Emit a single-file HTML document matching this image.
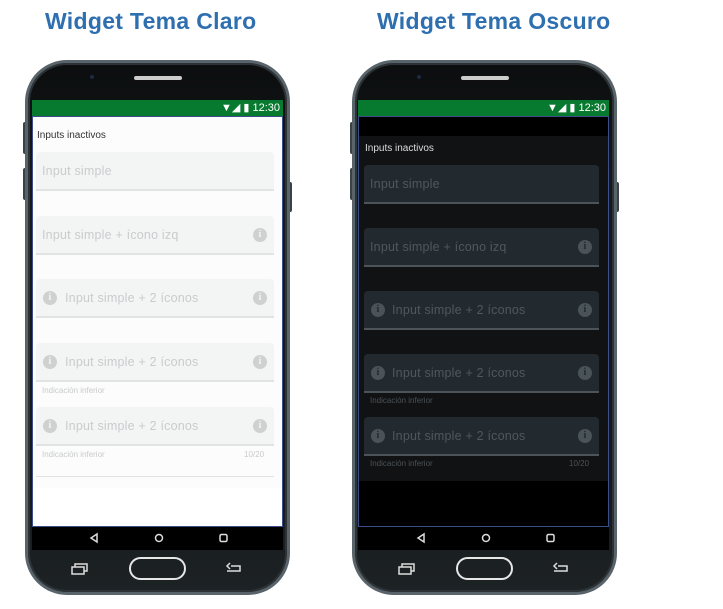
<!DOCTYPE html>
<html><head><meta charset="utf-8"><style>
*{margin:0;padding:0;box-sizing:border-box}
body{width:723px;height:609px;background:#fff;position:relative;overflow:hidden;font-family:"Liberation Sans",Arial,sans-serif}
.abs{position:absolute}
.title{position:absolute;top:8px;font-weight:bold;font-size:23px;color:#2e6fb0;letter-spacing:0.3px}
.phone{position:absolute;top:60px;width:265px;height:535px;border-radius:42px;background:linear-gradient(#0b0d0e,#15191b 20%,#15191b 80%,#1d2224);border:3px solid #59636a;box-shadow:inset 0 0 0 2px #2c3235}
.btn{position:absolute;width:4px;background:#3a4246;border-radius:2px}
.status{position:absolute;height:16px;background:#077a2f;color:#fff;font-size:10px}
.screen{position:absolute;width:251px;height:411px;border:1px solid #3a4f8a}
.nav{position:absolute;height:23px;background:#000}
.f{position:absolute;height:39px;border-radius:4px 4px 0 0;font-size:12.5px;line-height:39px;letter-spacing:0.2px}
.lt .f{background:#f3f5f5;border-bottom:2px solid #e2e4e4;color:#c9cccc}
.dk .f{background:#222a30;border-bottom:2px solid #4c545a;color:#4f585e}
.ic{position:absolute;top:12px;width:14px;height:14px;border-radius:50%;font:bold 10px/14px "Liberation Serif",serif;text-align:center}
.lt .ic{background:#cfd1d1;color:#f3f5f5}
.dk .ic{background:#4a5358;color:#222a30}
.h{position:absolute;font-size:8px}
.lt .h{color:#c8cbcb}.dk .h{color:#4a5257}
.lab{position:absolute;font-size:10px}
</style></head><body>
<div class="title" style="left:45px">Widget Tema Claro</div>
<div class="title" style="left:377px">Widget Tema Oscuro</div>

<!-- LEFT PHONE -->
<div class="btn" style="left:23px;top:122px;height:32px"></div>
<div class="btn" style="left:23px;top:168px;height:32px"></div>
<div class="btn" style="left:288px;top:182px;height:30px"></div>
<div class="phone" style="left:25px"></div>
<div class="abs" style="left:134px;top:76px;width:48px;height:4px;border-radius:2px;background:#ccc"></div>
<div class="abs" style="left:90px;top:75px;width:4px;height:4px;border-radius:50%;background:#1d2a44"></div>
<div class="status" style="left:32px;top:100px;width:251px"><span style="position:absolute;right:3px;top:1px;font-size:11px">&#9660;&#9698; &#9646; 12:30</span></div>
<div class="screen lt" style="left:32px;top:116px;background:#fff">
 <div class="abs" style="left:0;top:0;width:249px;height:371px;background:#fcfcfc"></div>
 <div class="lab" style="left:4px;top:13px;color:#333">Inputs inactivos</div>
 <div class="f" style="left:3px;top:35px;width:238px;padding-left:6px">Input simple</div>
 <div class="f" style="left:3px;top:99px;width:238px;padding-left:6px">Input simple + ícono izq<span class="ic" style="left:217px">i</span></div>
 <div class="f" style="left:3px;top:162px;width:238px;padding-left:29px"><span class="ic" style="left:7px">i</span>Input simple + 2 íconos<span class="ic" style="left:217px">i</span></div>
 <div class="f" style="left:3px;top:226px;width:238px;padding-left:29px"><span class="ic" style="left:7px">i</span>Input simple + 2 íconos<span class="ic" style="left:217px">i</span></div>
 <div class="h" style="left:9px;top:269px">Indicación inferior</div>
 <div class="f" style="left:3px;top:290px;width:238px;padding-left:29px"><span class="ic" style="left:7px">i</span>Input simple + 2 íconos<span class="ic" style="left:217px">i</span></div>
 <div class="h" style="left:9px;top:333px">Indicación inferior</div>
 <div class="h" style="left:211px;top:333px">10/20</div>
 <div class="abs" style="left:3px;top:359px;width:238px;height:1px;background:#e2e4e4"></div>
</div>
<div class="nav" style="left:32px;top:527px;width:251px"></div>

<!-- RIGHT PHONE -->
<div class="btn" style="left:350px;top:122px;height:32px"></div>
<div class="btn" style="left:350px;top:168px;height:32px"></div>
<div class="btn" style="left:615px;top:182px;height:30px"></div>
<div class="phone" style="left:352px"></div>
<div class="abs" style="left:461px;top:76px;width:48px;height:4px;border-radius:2px;background:#ccc"></div>
<div class="abs" style="left:417px;top:75px;width:4px;height:4px;border-radius:50%;background:#1d2a44"></div>
<div class="status" style="left:358px;top:100px;width:251px"><span style="position:absolute;right:3px;top:1px;font-size:11px">&#9660;&#9698; &#9646; 12:30</span></div>
<div class="screen dk" style="left:358px;top:116px;background:#000">
 <div class="abs" style="left:0;top:19px;width:249px;height:345px;background:#111213"></div>
 <div class="lab" style="left:6px;top:26px;color:#ddd">Inputs inactivos</div>
 <div class="f" style="left:5px;top:48px;width:235px;padding-left:6px">Input simple</div>
 <div class="f" style="left:5px;top:111px;width:235px;padding-left:6px">Input simple + ícono izq<span class="ic" style="left:214px">i</span></div>
 <div class="f" style="left:5px;top:174px;width:235px;padding-left:28px"><span class="ic" style="left:7px">i</span>Input simple + 2 íconos<span class="ic" style="left:214px">i</span></div>
 <div class="f" style="left:5px;top:237px;width:235px;padding-left:28px"><span class="ic" style="left:7px">i</span>Input simple + 2 íconos<span class="ic" style="left:214px">i</span></div>
 <div class="h" style="left:11px;top:279px">Indicación inferior</div>
 <div class="f" style="left:5px;top:300px;width:235px;padding-left:28px"><span class="ic" style="left:7px">i</span>Input simple + 2 íconos<span class="ic" style="left:214px">i</span></div>
 <div class="h" style="left:11px;top:342px">Indicación inferior</div>
 <div class="h" style="left:210px;top:342px">10/20</div>
</div>
<div class="nav" style="left:358px;top:527px;width:251px"></div>

<svg class="abs" style="left:0;top:0" width="723" height="609">
 <g fill="none" stroke="#ddd" stroke-width="1.5">
  <path d="M97 534 L91 538 L97 542 Z"/><circle cx="159" cy="538" r="3.5"/><rect x="220" y="534.5" width="7" height="7" rx="1.5"/>
  <path d="M424 534 L418 538 L424 542 Z"/><circle cx="486" cy="538" r="3.5"/><rect x="547" y="534.5" width="7" height="7" rx="1.5"/>
  <rect x="130" y="558" width="55" height="21" rx="10.5" stroke="#e6e6e6" stroke-width="2"/>
  <rect x="457" y="558" width="55" height="21" rx="10.5" stroke="#e6e6e6" stroke-width="2"/>
  <rect x="72" y="567" width="12" height="7"/><path d="M75 567 V564 H87 V571 H84"/>
  <rect x="399" y="567" width="12" height="7"/><path d="M402 567 V564 H414 V571 H411"/>
  <path d="M231 566 H240 V571 H227 M230 563 L227 566 L230 569"/>
  <path d="M558 566 H567 V571 H554 M557 563 L554 566 L557 569"/>
 </g>
</svg>
</body></html>
